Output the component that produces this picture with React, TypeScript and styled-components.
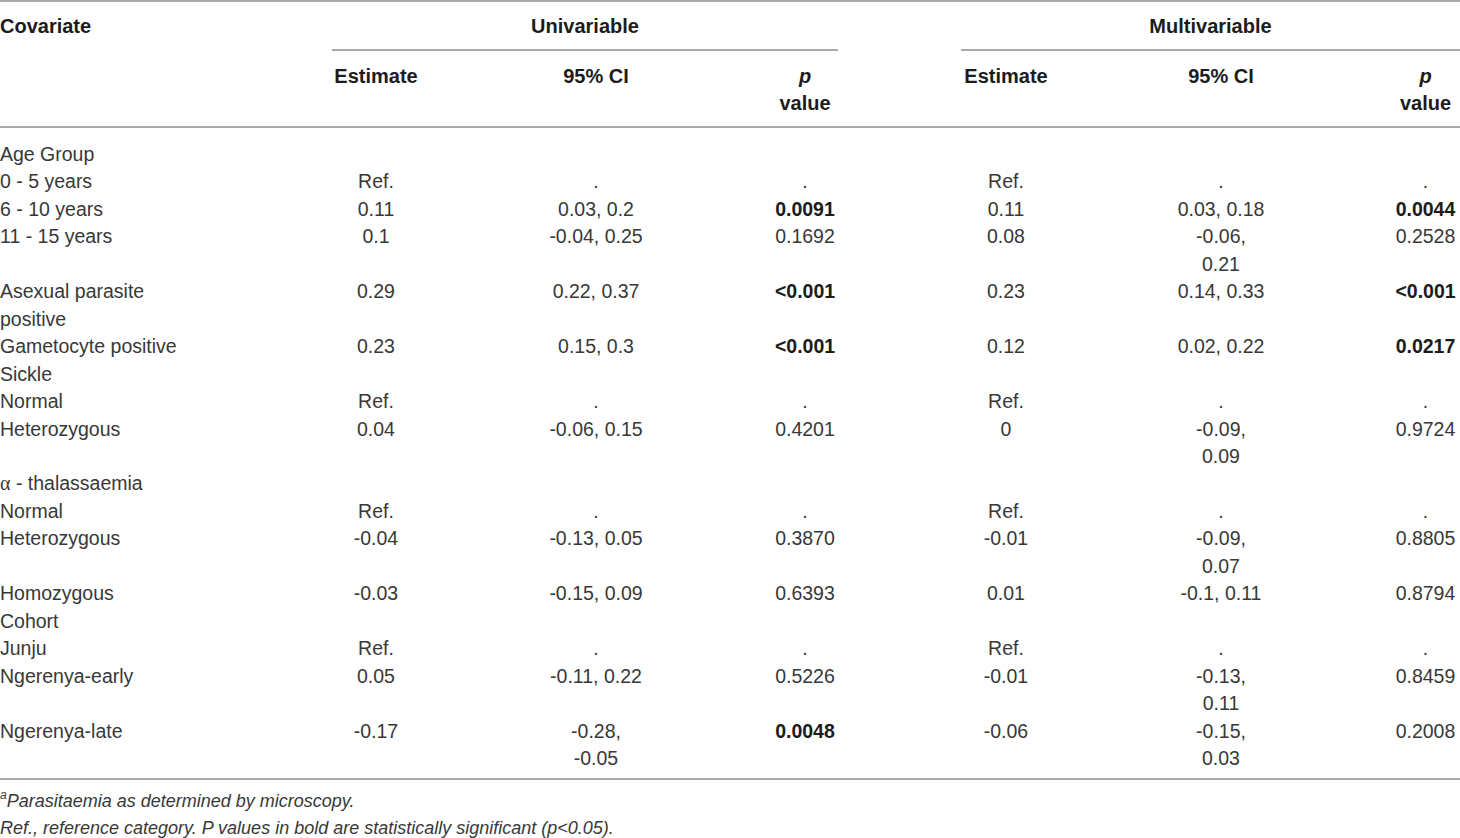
import React from "react";
import styled, { createGlobalStyle } from "styled-components";

const GlobalStyle = createGlobalStyle`
  html, body {
    margin: 0;
    padding: 0;
    background: #ffffff;
  }
  body {
    font-family: "Liberation Sans", Arial, sans-serif;
    color: #333333;
  }
`;

const columns = "332px 88px 352px 66px 123px 90px 340px 69px";
const rule = "2px solid #a9a9a9";

type Stat = [string, string, string];

interface Row {
  label: string;
  uni?: Stat;
  multi?: Stat;
  uniBold?: boolean;
  multiBold?: boolean;
}

const REF: Stat = ["Ref.", ".", "."];

const rows: Row[] = [
  { label: "Age Group" },
  { label: "0 - 5 years", uni: REF, multi: REF },
  { label: "6 - 10 years", uni: ["0.11", "0.03, 0.2", "0.0091"], uniBold: true, multi: ["0.11", "0.03, 0.18", "0.0044"], multiBold: true },
  { label: "11 - 15 years", uni: ["0.1", "-0.04, 0.25", "0.1692"], multi: ["0.08", "-0.06,|0.21", "0.2528"] },
  { label: "Asexual parasite|positive", uni: ["0.29", "0.22, 0.37", "<0.001"], uniBold: true, multi: ["0.23", "0.14, 0.33", "<0.001"], multiBold: true },
  { label: "Gametocyte positive", uni: ["0.23", "0.15, 0.3", "<0.001"], uniBold: true, multi: ["0.12", "0.02, 0.22", "0.0217"], multiBold: true },
  { label: "Sickle" },
  { label: "Normal", uni: REF, multi: REF },
  { label: "Heterozygous", uni: ["0.04", "-0.06, 0.15", "0.4201"], multi: ["0", "-0.09,|0.09", "0.9724"] },
  { label: "α - thalassaemia" },
  { label: "Normal", uni: REF, multi: REF },
  { label: "Heterozygous", uni: ["-0.04", "-0.13, 0.05", "0.3870"], multi: ["-0.01", "-0.09,|0.07", "0.8805"] },
  { label: "Homozygous", uni: ["-0.03", "-0.15, 0.09", "0.6393"], multi: ["0.01", "-0.1, 0.11", "0.8794"] },
  { label: "Cohort" },
  { label: "Junju", uni: REF, multi: REF },
  { label: "Ngerenya-early", uni: ["0.05", "-0.11, 0.22", "0.5226"], multi: ["-0.01", "-0.13,|0.11", "0.8459"] },
  { label: "Ngerenya-late", uni: ["-0.17", "-0.28,|-0.05", "0.0048"], uniBold: true, multi: ["-0.06", "-0.15,|0.03", "0.2008"] },
];

const Lines = ({ text }: { text: string }) => (
  <>
    {text.split("|").map((part, i) => (
      <React.Fragment key={i}>
        {i > 0 && <br />}
        {part.startsWith("α") ? (
          <>
            <Alpha>α</Alpha>
            {part.slice(1)}
          </>
        ) : (
          part
        )}
      </React.Fragment>
    ))}
  </>
);

const App = () => {
  return (
    <Page>
      <GlobalStyle />
      <Table>
        <HeadTop>
          <HeadCell>Covariate</HeadCell>
          <GroupCell $from={2} $to={5}>Univariable</GroupCell>
          <GroupCell $from={6} $to={9}>Multivariable</GroupCell>
        </HeadTop>
        <HeadSub>
          <span />
          <HeadCell $align="center">Estimate</HeadCell>
          <HeadCell $align="center">95% CI</HeadCell>
          <HeadCell $align="center">
            <i>p</i>
            <br />
            value
          </HeadCell>
          <span />
          <HeadCell $align="center">Estimate</HeadCell>
          <HeadCell $align="center">95% CI</HeadCell>
          <HeadCell $align="center">
            <i>p</i>
            <br />
            value
          </HeadCell>
        </HeadSub>
        <Body>
          {rows.map((row, i) => (
            <BodyRow key={i}>
              <Cell>
                <Lines text={row.label} />
              </Cell>
              {row.uni ? (
                <>
                  <Cell $align="center">{row.uni[0]}</Cell>
                  <Cell $align="center">
                    <Lines text={row.uni[1]} />
                  </Cell>
                  <Cell $align="center" $bold={row.uniBold}>{row.uni[2]}</Cell>
                  <span />
                  <Cell $align="center">{row.multi![0]}</Cell>
                  <Cell $align="center">
                    <Lines text={row.multi![1]} />
                  </Cell>
                  <Cell $align="center" $bold={row.multiBold}>{row.multi![2]}</Cell>
                </>
              ) : null}
            </BodyRow>
          ))}
        </Body>
      </Table>
      <Notes>
        <Note>
          <Sup>a</Sup>Parasitaemia as determined by microscopy.
        </Note>
        <Note>Ref., reference category. P values in bold are statistically significant (p&lt;0.05).</Note>
      </Notes>
    </Page>
  );
};

const Page = styled.div`
  width: 1460px;
  height: 838px;
  overflow: hidden;
  background: #ffffff;
`;

const Table = styled.div`
  border-top: ${rule};
  border-bottom: ${rule};
`;

const HeadTop = styled.div`
  display: grid;
  grid-template-columns: ${columns};
  align-items: start;
`;

const HeadSub = styled.div`
  display: grid;
  grid-template-columns: ${columns};
  border-bottom: ${rule};
  padding: 12px 0 9px;
`;

const HeadCell = styled.div<{ $align?: "left" | "center" }>`
  font-weight: 700;
  font-size: 20px;
  line-height: 27px;
  color: #1c1c1c;
  text-align: ${(p) => p.$align ?? "left"};
  padding-top: ${(p) => (p.$align ? "0" : "11px")};
  white-space: nowrap;
`;

const GroupCell = styled.div<{ $from: number; $to: number }>`
  grid-column: ${(p) => `${p.$from} / ${p.$to}`};
  font-weight: 700;
  font-size: 20px;
  line-height: 27px;
  color: #1c1c1c;
  text-align: center;
  padding: 11px 0 9px;
  border-bottom: ${rule};
`;

const Body = styled.div`
  padding: 13px 0 6px;
`;

const BodyRow = styled.div`
  display: grid;
  grid-template-columns: ${columns};
  align-items: start;
`;

const Cell = styled.div<{ $align?: "left" | "center"; $bold?: boolean }>`
  font-size: 19.5px;
  line-height: 27.45px;
  font-weight: ${(p) => (p.$bold ? 700 : 400)};
  color: ${(p) => (p.$bold ? "#1c1c1c" : "#383838")};
  text-align: ${(p) => p.$align ?? "left"};
  white-space: nowrap;
`;

const Alpha = styled.span`
  font-family: "Liberation Serif", "Times New Roman", serif;
  font-size: 20px;
`;

const Notes = styled.div`
  padding-top: 8px;
`;

const Note = styled.div`
  font-style: italic;
  font-size: 18px;
  line-height: 27px;
  color: #383838;
  white-space: nowrap;
`;

const Sup = styled.sup`
  font-size: 12px;
  line-height: 0;
  vertical-align: 8px;
`;

export default App;
